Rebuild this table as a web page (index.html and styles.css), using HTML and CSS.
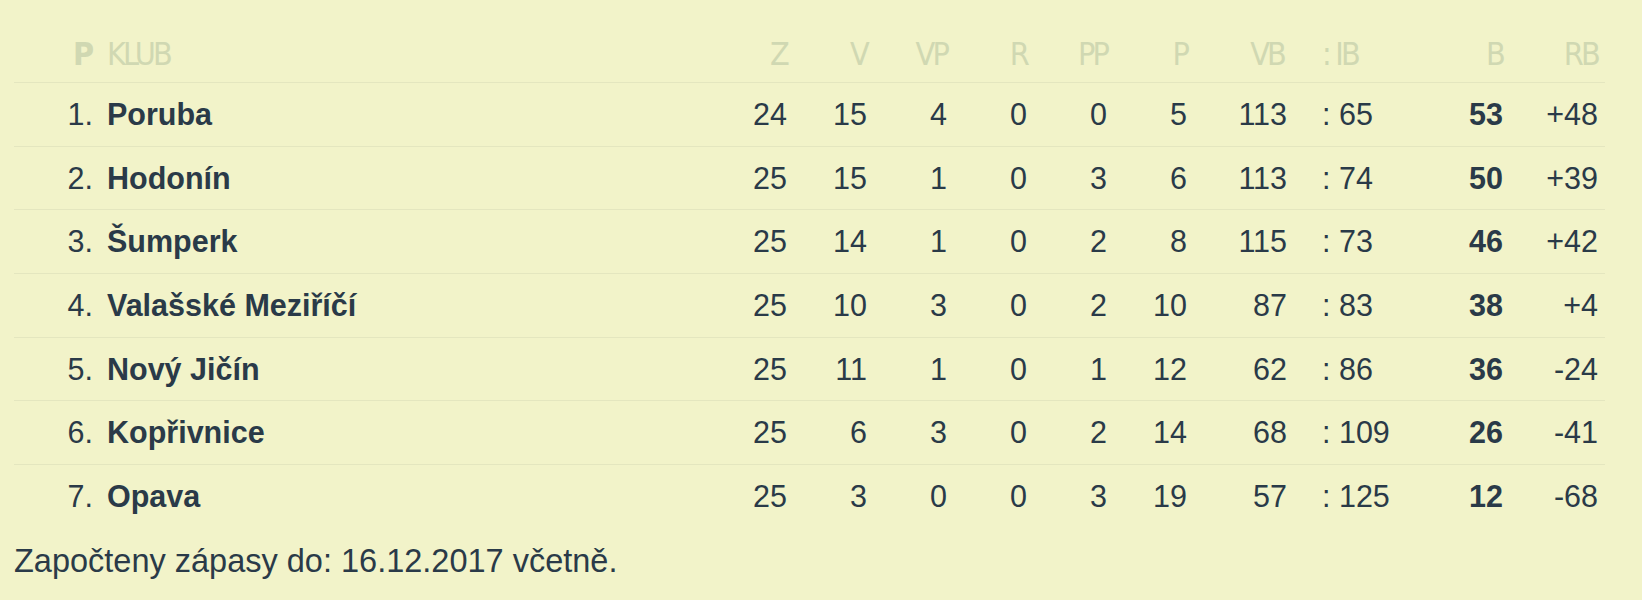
FILE: index.html
```html
<!DOCTYPE html>
<html lang="cs">
<head>
<meta charset="utf-8">
<title>Tabulka</title>
<link rel="stylesheet" href="styles.css">
</head>
<body>
<div class="standings">
  <div class="row head">
    <div class="c pos">P</div>
    <div class="c club">KLUB</div>
    <div class="c num">Z</div>
    <div class="c num">V</div>
    <div class="c num">VP</div>
    <div class="c num">R</div>
    <div class="c num">PP</div>
    <div class="c num">P</div>
    <div class="c num vb">VB</div>
    <div class="c ib">: IB</div>
    <div class="c num">B</div>
    <div class="c num">RB</div>
  </div>
  <div class="row"><div class="c pos">1.</div><div class="c club">Poruba</div><div class="c num">24</div><div class="c num">15</div><div class="c num">4</div><div class="c num">0</div><div class="c num">0</div><div class="c num">5</div><div class="c num vb">113</div><div class="c ib">: 65</div><div class="c num pts">53</div><div class="c num">+48</div></div>
  <div class="row"><div class="c pos">2.</div><div class="c club">Hodonín</div><div class="c num">25</div><div class="c num">15</div><div class="c num">1</div><div class="c num">0</div><div class="c num">3</div><div class="c num">6</div><div class="c num vb">113</div><div class="c ib">: 74</div><div class="c num pts">50</div><div class="c num">+39</div></div>
  <div class="row"><div class="c pos">3.</div><div class="c club">Šumperk</div><div class="c num">25</div><div class="c num">14</div><div class="c num">1</div><div class="c num">0</div><div class="c num">2</div><div class="c num">8</div><div class="c num vb">115</div><div class="c ib">: 73</div><div class="c num pts">46</div><div class="c num">+42</div></div>
  <div class="row"><div class="c pos">4.</div><div class="c club">Valašské Meziříčí</div><div class="c num">25</div><div class="c num">10</div><div class="c num">3</div><div class="c num">0</div><div class="c num">2</div><div class="c num">10</div><div class="c num vb">87</div><div class="c ib">: 83</div><div class="c num pts">38</div><div class="c num">+4</div></div>
  <div class="row"><div class="c pos">5.</div><div class="c club">Nový Jičín</div><div class="c num">25</div><div class="c num">11</div><div class="c num">1</div><div class="c num">0</div><div class="c num">1</div><div class="c num">12</div><div class="c num vb">62</div><div class="c ib">: 86</div><div class="c num pts">36</div><div class="c num">-24</div></div>
  <div class="row"><div class="c pos">6.</div><div class="c club">Kopřivnice</div><div class="c num">25</div><div class="c num">6</div><div class="c num">3</div><div class="c num">0</div><div class="c num">2</div><div class="c num">14</div><div class="c num vb">68</div><div class="c ib">: 109</div><div class="c num pts">26</div><div class="c num">-41</div></div>
  <div class="row last"><div class="c pos">7.</div><div class="c club">Opava</div><div class="c num">25</div><div class="c num">3</div><div class="c num">0</div><div class="c num">0</div><div class="c num">3</div><div class="c num">19</div><div class="c num vb">57</div><div class="c ib">: 125</div><div class="c num pts">12</div><div class="c num">-68</div></div>
</div>
<p class="note">Započteny zápasy do: 16.12.2017 včetně.</p>
</body>
</html>
```

FILE: styles.css
```css
html, body {
  margin: 0;
  padding: 0;
  background: #f2f3c9;
}
body {
  font-family: "Liberation Sans", Arial, sans-serif;
  font-size: 30.5px;
  color: #2a3a48;
}
.standings {
  width: 1591px;
  margin-left: 14px;
}
.row {
  display: grid;
  grid-template-columns: 86px 614px 80px 80px 80px 80px 80px 80px 121px 105px 90px 95px;
  align-items: center;
  height: 63.7px;
  box-sizing: border-box;
  border-bottom: 1px solid #e4e6bf;
  line-height: 1.15;
}
.row.last {
  border-bottom: none;
}
.row.head {
  height: 83px;
  align-items: end;
  padding-bottom: 9px;
  font-family: "Liberation Sans Narrow", "DejaVu Sans Condensed", sans-serif;
  font-size: 32px;
  letter-spacing: -2.8px;
  color: #d0d8b2;
}
.c {
  padding: 0 7px;
  white-space: nowrap;
}
.pos {
  text-align: right;
}
.head .pos {
  font-weight: bold;
  letter-spacing: -1px;
}
.club {
  font-weight: bold;
}
.head .club {
  font-weight: normal;
}
.num {
  text-align: right;
}
.vb {
  padding-right: 28px;
}
.head .vb {
  padding-right: 31px;
}
.ib {
  text-align: left;
}
.pts {
  font-weight: bold;
}
.note {
  margin: 14px 0 0 14px;
  font-size: 32.5px;
  line-height: 1.15;
}
```
